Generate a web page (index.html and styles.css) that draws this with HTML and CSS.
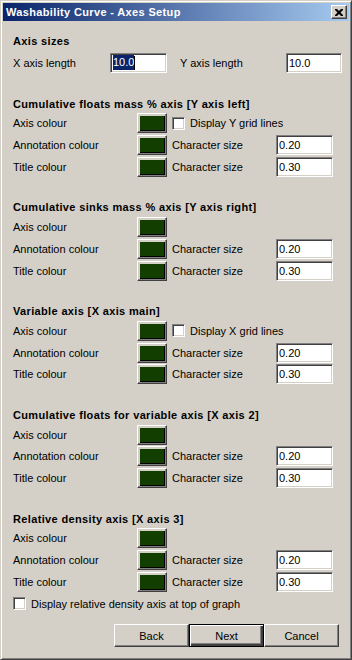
FILE: index.html
```html
<!DOCTYPE html>
<html lang="en">
<head>
    <meta charset="UTF-8">
    <title>Washability Curve - Axes Setup</title>
    <link rel="stylesheet" href="styles.css">
</head>
<body>

<div class="window">
    <div class="titlebar">
        <span class="title">Washability Curve - Axes Setup</span>
        <span class="close">
            <svg width="8" height="7" viewBox="0 0 8 7"><path d="M0 0h2l2 2 2-2h2v1l-2.5 2.5 2.5 2.5v1h-2l-2-2-2 2h-2v-1l2.5-2.5-2.5-2.5z" fill="#000"/></svg>
        </span>
    </div>

    <div class="client">
        <div class="section sizes">
            <div class="heading">Axis sizes</div>
            <div class="size-row">
                <span>X axis length</span>
                <span class="field"><span class="sel">10.0</span><span class="caret"></span></span>
                <span></span>
                <span>Y axis length</span>
                <span class="field">10.0</span>
            </div>
        </div>

        <div class="section">
            <div class="heading">Cumulative floats mass % axis [Y axis left]</div>
            <div class="row">
                <span>Axis colour</span>
                <span class="swatch"><span></span></span>
                <label class="check span2"><span class="box"></span>Display Y grid lines</label>
            </div>
            <div class="row">
                <span>Annotation colour</span>
                <span class="swatch"><span></span></span>
                <span>Character size</span>
                <span class="field">0.20</span>
            </div>
            <div class="row">
                <span>Title colour</span>
                <span class="swatch"><span></span></span>
                <span>Character size</span>
                <span class="field">0.30</span>
            </div>
        </div>

        <div class="section">
            <div class="heading">Cumulative sinks mass % axis [Y axis right]</div>
            <div class="row">
                <span>Axis colour</span>
                <span class="swatch"><span></span></span>
            </div>
            <div class="row">
                <span>Annotation colour</span>
                <span class="swatch"><span></span></span>
                <span>Character size</span>
                <span class="field">0.20</span>
            </div>
            <div class="row">
                <span>Title colour</span>
                <span class="swatch"><span></span></span>
                <span>Character size</span>
                <span class="field">0.30</span>
            </div>
        </div>

        <div class="section">
            <div class="heading">Variable axis [X axis main]</div>
            <div class="row">
                <span>Axis colour</span>
                <span class="swatch"><span></span></span>
                <label class="check span2"><span class="box"></span>Display X grid lines</label>
            </div>
            <div class="row">
                <span>Annotation colour</span>
                <span class="swatch"><span></span></span>
                <span>Character size</span>
                <span class="field">0.20</span>
            </div>
            <div class="row">
                <span>Title colour</span>
                <span class="swatch"><span></span></span>
                <span>Character size</span>
                <span class="field">0.30</span>
            </div>
        </div>

        <div class="section">
            <div class="heading">Cumulative floats for variable axis [X axis 2]</div>
            <div class="row">
                <span>Axis colour</span>
                <span class="swatch"><span></span></span>
            </div>
            <div class="row">
                <span>Annotation colour</span>
                <span class="swatch"><span></span></span>
                <span>Character size</span>
                <span class="field">0.20</span>
            </div>
            <div class="row">
                <span>Title colour</span>
                <span class="swatch"><span></span></span>
                <span>Character size</span>
                <span class="field">0.30</span>
            </div>
        </div>

        <div class="section last">
            <div class="heading">Relative density axis [X axis 3]</div>
            <div class="row">
                <span>Axis colour</span>
                <span class="swatch"><span></span></span>
            </div>
            <div class="row">
                <span>Annotation colour</span>
                <span class="swatch"><span></span></span>
                <span>Character size</span>
                <span class="field">0.20</span>
            </div>
            <div class="row">
                <span>Title colour</span>
                <span class="swatch"><span></span></span>
                <span>Character size</span>
                <span class="field">0.30</span>
            </div>
            <div class="row">
                <label class="check span4"><span class="box"></span>Display relative density axis at top of graph</label>
            </div>
        </div>

        <div class="buttons">
            <span class="btn">Back</span>
            <span class="btn default">Next</span>
            <span class="btn">Cancel</span>
        </div>
    </div>
</div>

</body>
</html>
```

FILE: styles.css
```css
body { margin: 0; font-family: "Liberation Sans", Arial, sans-serif; font-size: 11px; color: #000; background: #d4d0c8; }
.window { width: 352px; height: 660px; box-sizing: border-box; padding: 2px; background: #d4d0c8; border: 1px solid; border-color: #d4d0c8 #404040 #404040 #d4d0c8; box-shadow: inset 1px 1px #fff, inset -1px -1px #808080; overflow: hidden; }

.titlebar { height: 18px; display: flex; align-items: center; justify-content: space-between; padding: 0 2px 0 3px; background: linear-gradient(to right, #0a246a, #a6caf0); }
.title { color: #fff; font-weight: bold; letter-spacing: 0.35px; line-height: 18px; }
.close { width: 16px; height: 14px; box-sizing: border-box; display: flex; align-items: center; justify-content: center; background: #d4d0c8; border: 1px solid; border-color: #fff #404040 #404040 #fff; box-shadow: inset -1px -1px #808080; }

.client { padding: 11.5px 10px 0 10px; }
.section { margin-bottom: 21.5px; }
.section.sizes { margin-bottom: 20px; }
.section.last { margin-bottom: 9.5px; }
.heading { height: 17px; line-height: 17px; font-weight: bold; letter-spacing: 0.35px; white-space: nowrap; }

.size-row { height: 26px; display: grid; grid-template-columns: 97px 57px 13px 106px 56px; align-items: center; }
.row { height: 21.75px; display: grid; grid-template-columns: 124px 35px 104px 57px; align-items: center; white-space: nowrap; }
.span2 { grid-column: span 2; }
.span4 { grid-column: span 4; }

.field { height: 20px; box-sizing: border-box; display: flex; align-items: center; padding-left: 2px; background: #fff; border: 1px solid; border-color: #808080 #fff #fff #808080; box-shadow: inset 1px 1px #404040, inset -1px -1px #d4d0c8; }
.sel { background: #0a246a; color: #fff; line-height: 15px; }
.caret { width: 1px; height: 14px; background: #000; }

.swatch { width: 30px; height: 20px; box-sizing: border-box; padding: 2px 1px 1px 2px; background: #d4d0c8; border: 1px solid; border-color: #fff #404040 #404040 #fff; box-shadow: inset -1px -1px #808080; }
.swatch span { display: block; height: 100%; background: #123f00; box-shadow: inset -1px -1px #000; }

.check { display: flex; align-items: center; gap: 5px; }
.box { width: 13px; height: 13px; box-sizing: border-box; background: #fff; border: 1px solid; border-color: #808080 #fff #fff #808080; box-shadow: inset 1px 1px #404040, inset -1px -1px #d4d0c8; }

.buttons { display: flex; justify-content: flex-end; }
.btn { width: 75px; height: 23px; box-sizing: border-box; display: flex; align-items: center; justify-content: center; background: #d4d0c8; border: 1px solid; border-color: #fff #404040 #404040 #fff; box-shadow: inset -1px -1px #808080; }
.btn.default { border-color: #000; box-shadow: inset 1px 1px #fff, inset -2px -2px #404040, inset -3px -3px #808080; }
```
